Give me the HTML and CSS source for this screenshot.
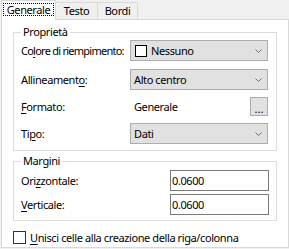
FILE: index.html
```html
<!DOCTYPE html>
<html lang="it">
<head>
    <meta charset="UTF-8">
    <title>Formato cella</title>
    <link rel="stylesheet" href="styles.css">
</head>
<body>
    <div class="tabs">
        <div class="tab active"><span class="focus">Generale</span></div>
        <div class="tab tab-testo">Testo</div>
        <div class="tab tab-bordi">Bordi</div>
    </div>

    <div class="tab-page">
        <fieldset class="group group-props">
            <legend>Proprietà</legend>
            <div class="row">
                <label class="tight">Co<u>l</u>ore di riempimento:</label>
                <div class="combo">
                    <span class="swatch"></span>
                    <span class="value">Nessuno</span>
                    <svg class="chevron" width="7" height="4" viewBox="0 0 7 4"><path d="M0.5 0.5 L3.5 3.5 L6.5 0.5" fill="none" stroke="#707070"/></svg>
                </div>
            </div>
            <div class="row row-align">
                <label>Allineament<u>o</u>:</label>
                <div class="combo">
                    <span class="value">Alto centro</span>
                    <svg class="chevron" width="7" height="4" viewBox="0 0 7 4"><path d="M0.5 0.5 L3.5 3.5 L6.5 0.5" fill="none" stroke="#707070"/></svg>
                </div>
            </div>
            <div class="row row-format">
                <label><u>F</u>ormato:</label>
                <div class="format">
                    <span class="value">Generale</span>
                    <button class="dots">...</button>
                </div>
            </div>
            <div class="row row-type">
                <label>Ti<u>p</u>o:</label>
                <div class="combo">
                    <span class="value">Dati</span>
                    <svg class="chevron" width="7" height="4" viewBox="0 0 7 4"><path d="M0.5 0.5 L3.5 3.5 L6.5 0.5" fill="none" stroke="#707070"/></svg>
                </div>
            </div>
        </fieldset>

        <fieldset class="group group-margins">
            <legend>Margini</legend>
            <div class="mrow">
                <label>Ori<u>z</u>zontale:</label>
                <div class="input">0.0600</div>
            </div>
            <div class="mrow">
                <label><u>V</u>erticale:</label>
                <div class="input">0.0600</div>
            </div>
        </fieldset>

        <div class="check">
            <span class="box"></span>
            <span><u>U</u>nisci celle alla creazione della riga/colonna</span>
        </div>
    </div>
</body>
</html>
```

FILE: styles.css
```css
* {
    box-sizing: border-box;
}
body {
    margin: 0;
    background: #f0f0f0;
    font-family: "Noto Sans", sans-serif;
    font-size: 11px;
    letter-spacing: -0.4px;
    color: #000;
    width: 289px;
    height: 249px;
    overflow: hidden;
    white-space: nowrap;
}
u {
    text-decoration: underline;
    text-underline-offset: 2px;
}
.tabs {
    display: flex;
    height: 19px;
    padding-left: 1px;
    align-items: flex-end;
}
.tab {
    height: 17px;
    line-height: 16px;
    text-align: center;
    border: 1px solid #d9d9d9;
    border-bottom: none;
    margin-left: -1px;
    background: #f0f0f0;
}
.tab-testo {
    width: 43px;
}
.tab-bordi {
    width: 41px;
}
.tab.active {
    width: 55px;
    height: 20px;
    margin: 0 0 -1px 0;
    background: #fff;
    padding: 2px 1px 0 1px;
    position: relative;
    z-index: 1;
}
.focus {
    display: block;
    border: 1px dotted #000;
    line-height: 11px;
    height: 13px;
}
.tab-page {
    margin: 0 0 2px 1px;
    width: 288px;
    height: 229px;
    border: 1px solid #d9d9d9;
    background: #fff;
    padding-top: 5px;
}
.group {
    margin: 0 0 0 11px;
    width: 264px;
    border: 1px solid #dcdcdc;
    padding: 1px 7px 0 7px;
}
.group legend {
    padding: 0 2px;
    margin-left: 0;
    line-height: 14px;
}
.group-props {
    height: 126px;
}
.row {
    display: flex;
    align-items: center;
    height: 21px;
}
.row-align {
    margin-top: 8px;
}
.row-format {
    margin-top: 6px;
}
.row-type {
    margin-top: 6px;
}
.row label {
    flex: none;
    width: 109px;
}
.row label.tight {
    letter-spacing: -0.75px;
}
.combo {
    flex: none;
    width: 138px;
    height: 21px;
    border: 1px solid #adadad;
    background: #e1e1e1;
    display: flex;
    align-items: center;
    padding-left: 3px;
}
.combo .value {
    flex: 1;
}
.chevron {
    margin-right: 5px;
}
.swatch {
    width: 12px;
    height: 12px;
    border: 1px solid #000;
    background: #fff;
    margin: 0 4px 0 1px;
}
.format {
    display: flex;
    align-items: center;
    width: 138px;
    padding-left: 4px;
}
.format .value {
    flex: 1;
}
.dots {
    width: 18px;
    height: 19px;
    border: 1px solid #adadad;
    background: #e1e1e1;
    padding: 4px 0 0 0;
    font: inherit;
    letter-spacing: 0;
    line-height: 12px;
}
.group-margins {
    margin-top: 3px;
    height: 67px;
    padding-top: 2px;
}
.mrow {
    display: flex;
    align-items: center;
    justify-content: space-between;
    height: 21px;
}
.mrow + .mrow {
    margin-top: 3px;
}
.input {
    width: 99px;
    height: 21px;
    border: 1px solid #7a7a7a;
    padding-left: 1px;
    line-height: 19px;
}
.check {
    display: flex;
    align-items: center;
    gap: 4px;
    margin: 9px 0 0 11px;
}
.box {
    width: 13px;
    height: 13px;
    border: 1px solid #333;
    background: #fff;
}
```
